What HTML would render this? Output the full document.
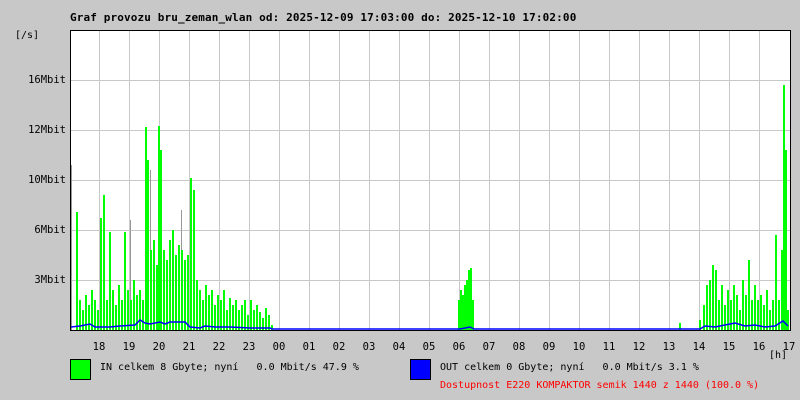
<!DOCTYPE html>
<html><head><meta charset="utf-8"><style>
body{margin:0;width:800px;height:400px;background:#c8c8c8;font-family:"DejaVu Sans Mono","Liberation Mono",monospace;font-size:10px;color:#000;position:relative;overflow:hidden}
.t{position:absolute;white-space:pre}
.h{position:absolute;top:341px;width:30px;margin-left:-15px;text-align:center;font-size:10.5px}
.y{position:absolute;font-size:10.5px;right:734px;text-align:right}
</style></head><body>
<div class="t" style="left:70px;top:11px;font-weight:bold;font-size:11px;letter-spacing:0.13px">Graf provozu bru_zeman_wlan od: 2025-12-09 17:03:00 do: 2025-12-10 17:02:00</div>
<div class="t" style="left:15px;top:30px">[/s]</div>
<div class="y" style="top:74px">16Mbit</div>
<div class="y" style="top:124px">12Mbit</div>
<div class="y" style="top:174px">10Mbit</div>
<div class="y" style="top:224px">6Mbit</div>
<div class="y" style="top:274px">3Mbit</div>
<svg style="position:absolute;left:0;top:0" width="800" height="400">
<rect x="70.5" y="30.5" width="720" height="300" fill="#fff"/>
<g stroke="#c8c8c8" stroke-width="1">
<path d="M99.5 31V330M129.5 31V330M159.5 31V330M189.5 31V330M219.5 31V330M249.5 31V330M279.5 31V330M309.5 31V330M339.5 31V330M369.5 31V330M399.5 31V330M429.5 31V330M459.5 31V330M489.5 31V330M519.5 31V330M549.5 31V330M579.5 31V330M609.5 31V330M639.5 31V330M669.5 31V330M699.5 31V330M729.5 31V330M759.5 31V330"/>
<path d="M71 80.5H790M71 130.5H790M71 180.5H790M71 230.5H790M71 280.5H790"/>
</g>
<path d="M71.5 330V165M130.5 330V220M150.5 330V170M181.5 330V210" stroke="#999" stroke-width="1"/>
<g stroke="#00ff00" stroke-width="2" fill="none" shape-rendering="crispEdges">
<path d="M77 330V212M80 330V300M83 330V310M86 330V295M89 330V305M92 330V290M95 330V300M98 330V310M101 330V218M104 330V195M107 330V300M110 330V232M113 330V290M116 330V305M119 330V285M122 330V300M125 330V232M128 330V290M131 330V300M134 330V280M137 330V295M140 330V290M143 330V300M146 330V127M148 330V160M151 330V250M154 330V240M157 330V265M159 330V126M161 330V150M164 330V250M167 330V260M170 330V240M173 330V230M176 330V255M179 330V245M182 330V250M185 330V260M188 330V255M191 330V178M194 330V190M197 330V280M200 330V290M203 330V300M206 330V285M209 330V295M212 330V290M215 330V305M218 330V295M221 330V300M224 330V290M227 330V310M230 330V298M233 330V305M236 330V300M239 330V310M242 330V305M245 330V300M248 330V315M251 330V300M254 330V310M257 330V305M260 330V312M263 330V318M266 330V308M269 330V315M272 330V325"/>
<path d="M459 330V300M461 330V290M463 330V295M465 330V285M467 330V280M469 330V270M471 330V268M473 330V300"/>
<path d="M680 330V323M700 330V320M704 330V305M707 330V285M710 330V280M713 330V265M716 330V270M719 330V300M722 330V285M725 330V305M728 330V290M731 330V300M734 330V285M737 330V295M740 330V310M743 330V280M746 330V295M749 330V260M752 330V300M755 330V285M758 330V300M761 330V295M764 330V305M767 330V290M770 330V310M773 330V300M776 330V235M779 330V300M782 330V250M784 330V85M786 330V150M788 330V310"/>
</g>
<polyline fill="none" stroke="#0000ff" stroke-width="1.5" points="71,327 80,326 90,324 95,327 110,327 120,326 135,325 140,320 145,323 150,324 160,322 165,324 170,322 175,322 185,322 190,327 200,328 205,326 215,327 230,327 250,328 270,328 272,329 460,329 470,327 474,329 700,329 705,326 715,327 725,325 735,323 745,326 755,325 765,327 775,326 783,321 788,326"/>
<rect x="70.5" y="30.5" width="720" height="300" fill="none" stroke="#000" stroke-width="1"/>
<rect x="70.5" y="359.5" width="20" height="20" fill="#00ff00" stroke="#000"/>
<rect x="410.5" y="359.5" width="20" height="20" fill="#0000ff" stroke="#000"/>
</svg>
<div class="h" style="left:99px">18</div><div class="h" style="left:129px">19</div><div class="h" style="left:159px">20</div><div class="h" style="left:189px">21</div><div class="h" style="left:219px">22</div><div class="h" style="left:249px">23</div><div class="h" style="left:279px">00</div><div class="h" style="left:309px">01</div><div class="h" style="left:339px">02</div><div class="h" style="left:369px">03</div><div class="h" style="left:399px">04</div><div class="h" style="left:429px">05</div><div class="h" style="left:459px">06</div><div class="h" style="left:489px">07</div><div class="h" style="left:519px">08</div><div class="h" style="left:549px">09</div><div class="h" style="left:579px">10</div><div class="h" style="left:609px">11</div><div class="h" style="left:639px">12</div><div class="h" style="left:669px">13</div><div class="h" style="left:699px">14</div><div class="h" style="left:729px">15</div><div class="h" style="left:759px">16</div><div class="h" style="left:789px">17</div>
<div class="t" style="left:769px;top:350px">[h]</div>
<div class="t" style="left:100px;top:362px">IN celkem 8 Gbyte; nyní   0.0 Mbit/s 47.9 %</div>
<div class="t" style="left:440px;top:362px">OUT celkem 0 Gbyte; nyní   0.0 Mbit/s 3.1 %</div>
<div class="t" style="left:440px;top:380px;color:#ff0000">Dostupnost E220 KOMPAKTOR semik 1440 z 1440 (100.0 %)</div>
</body></html>
